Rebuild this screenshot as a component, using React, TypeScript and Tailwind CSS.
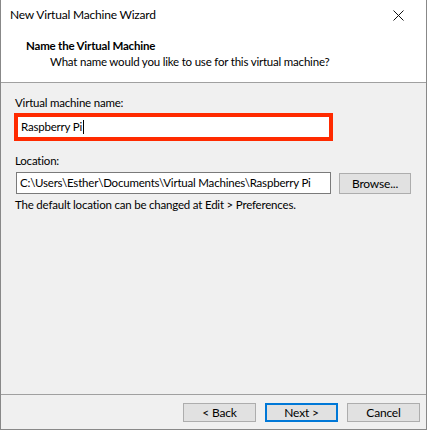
import React from 'react';

const font = { fontFamily: 'Lato, "Noto Sans", "Liberation Sans", sans-serif' };

const Button: React.FC<{ label: string; focused?: boolean; className?: string }> = ({ label, focused, className }) => (
  <button
    className={
      'h-[19px] bg-[#e1e1e1] text-[12px] leading-none text-black flex items-center justify-center whitespace-nowrap ' +
      (focused ? 'border-2 border-[#0078d7] ' : 'border border-[#adadad] ') +
      (className ?? '')
    }
  >
    {label}
  </button>
);

export default function App() {
  return (
    <div className="w-[428px] h-[430px] bg-white whitespace-nowrap tracking-[-0.2px]" style={font}>
      <div className="w-[427px] h-[430px] border-l border-r border-b border-[#888888] flex flex-col">
        {/* title bar */}
        <div className="h-[30px] flex items-center justify-between pl-[9px] pr-[22px] bg-white">
          <span className="text-[12px] text-black">New Virtual Machine Wizard</span>
          <svg width="11" height="11" viewBox="0 0 11 11" className="mt-[1px]">
            <path d="M0.5 0.5 L10.5 10.5 M10.5 0.5 L0.5 10.5" stroke="#111" strokeWidth="1" />
          </svg>
        </div>

        {/* header */}
        <div className="h-[53px] bg-white border-b border-[#a0a0a0] pl-[25px] pt-[8px]">
          <div className="text-[11.5px] font-bold text-black leading-[16px]">Name the Virtual Machine</div>
          <div className="text-[11.5px] text-black leading-[16px] pl-[24px]">
            What name would you like to use for this virtual machine?
          </div>
        </div>

        {/* body */}
        <div className="flex-1 bg-[#f0f0f0] px-[13px] pt-[12px] flex flex-col text-[11.5px]">
          <label className="text-black leading-[16px] pl-[1px]">Virtual machine name:</label>
          <div className="mt-[2px] w-[319px] h-[28px] border-[4px] border-[#ff2a00] bg-white flex items-center pl-[3px]">
            <span className="text-black">Raspberry Pi</span>
            <span className="w-px h-[14px] bg-black ml-[1px]" />
          </div>

          <label className="mt-[12px] text-black leading-[16px] pl-[1px]">Location:</label>
          <div className="mt-[3px] flex items-start">
            <div className="ml-[2px] w-[315px] h-[22px] border border-[#7a7a7a] bg-white flex items-center pl-[3px] overflow-hidden">
              <span className="text-black">C:\Users\Esther\Documents\Virtual Machines\Raspberry Pi</span>
            </div>
            <Button label="Browse..." className="ml-[8px] mt-[1px] w-[72px] !h-[21px]" />
          </div>
          <div className="mt-[3px] text-black leading-[16px] pl-[1px]">
            The default location can be changed at Edit &gt; Preferences.
          </div>

          <div className="flex-1" />
        </div>

        {/* footer */}
        <div className="h-[35px] bg-[#f0f0f0] border-t border-[#a0a0a0] flex items-start justify-end pt-[8px] pr-[6px] gap-[9px]">
          <Button label="< Back" className="w-[73px]" />
          <Button label="Next >" focused className="w-[73px]" />
          <Button label="Cancel" className="w-[73px]" />
        </div>
      </div>
    </div>
  );
}
